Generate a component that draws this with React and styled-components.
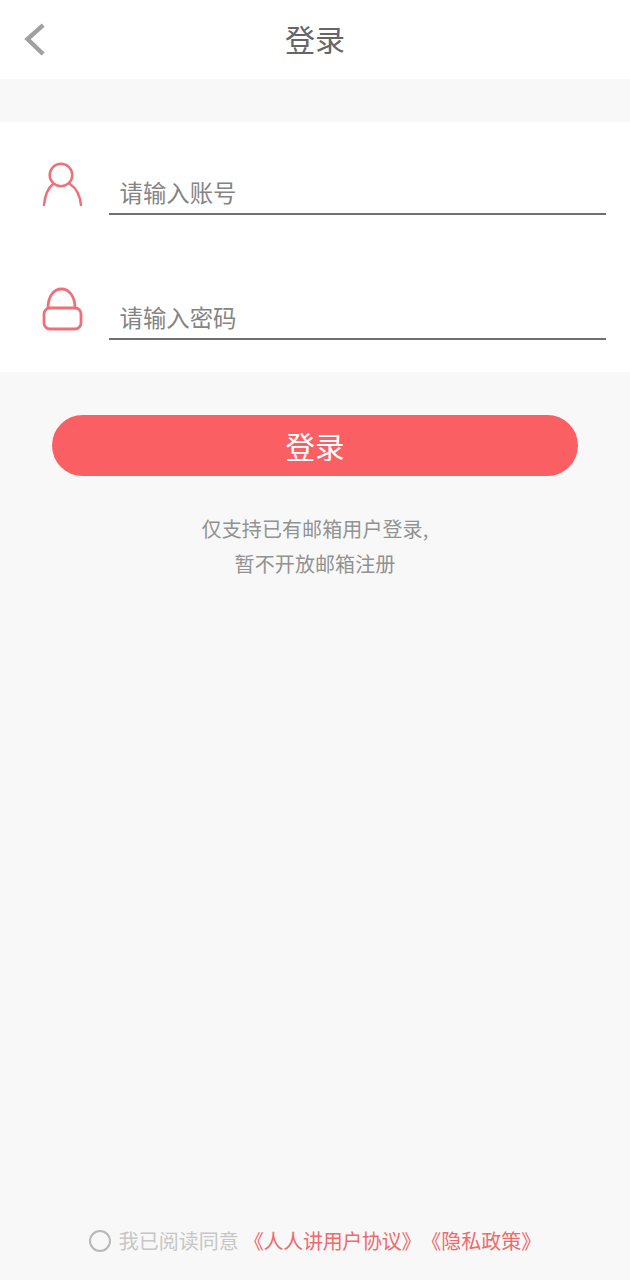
import React from "react";
import styled, { createGlobalStyle } from "styled-components";

const GlobalStyle = createGlobalStyle`
  html, body {
    margin: 0;
    padding: 0;
    background: #f8f8f8;
  }
  body {
    font-family: "Noto Sans CJK SC", "Liberation Sans", sans-serif;
  }
`;

const Page = styled.div`
  width: 630px;
  height: 1280px;
  display: flex;
  flex-direction: column;
  background: #f8f8f8;
  overflow: hidden;
`;

const Header = styled.header`
  height: 79px;
  flex: none;
  background: #fff;
  display: grid;
  grid-template-columns: 1fr auto 1fr;
  align-items: center;
`;

const BackButton = styled.div`
  padding-left: 24px;
  height: 34px;
  display: flex;
  align-items: center;
`;

const Title = styled.h1`
  margin: 0;
  padding-bottom: 4px;
  font-size: 30px;
  font-weight: 400;
  line-height: 40px;
  color: #666;
`;

const FormCard = styled.section`
  margin-top: 43px;
  height: 250px;
  flex: none;
  background: #fff;
  box-sizing: border-box;
  padding-top: 40px;
  display: flex;
  flex-direction: column;
  gap: 72px;
`;

const FieldRow = styled.div`
  display: flex;
  align-items: flex-start;
  height: 53px;
  padding: 0 24px 0 42px;
`;

const IconBox = styled.div`
  width: 67px;
  flex: none;
  line-height: 0;
`;

const FieldText = styled.div`
  flex: 1;
  height: 53px;
  box-sizing: border-box;
  border-bottom: 2px solid #707070;
  padding: 13px 0 0 10.5px;
  font-size: 23.4px;
  line-height: 34px;
  color: #848484;
`;

const SubmitButton = styled.button`
  display: block;
  margin: 43px auto 0;
  width: 526px;
  height: 61px;
  border: 0;
  border-radius: 31px;
  background: #fa5f63;
  color: #fff;
  font-family: inherit;
  font-size: 29.5px;
  line-height: 40px;
  padding: 0 0 2px;
`;

const Notice = styled.p`
  margin: 35px 0 0;
  text-align: center;
  font-size: 20px;
  line-height: 35px;
  letter-spacing: 0.1px;
  color: #929292;
`;

const Footer = styled.footer`
  margin-top: auto;
  height: 51px;
  display: flex;
  justify-content: center;
  align-items: flex-start;
  font-size: 20px;
  line-height: 24px;
`;

const Radio = styled.span`
  width: 22px;
  height: 22px;
  box-sizing: border-box;
  border: 2px solid #b8b8b8;
  border-radius: 50%;
  margin: 1px 8px 0 0;
  flex: none;
`;

const AgreeText = styled.span`
  color: #c6c6c6;
  margin-right: 5px;
`;

const PolicyLink = styled.span`
  color: #ee6a6d;
  letter-spacing: ${(props) => props.$tracking || 0}px;
`;

const UserIcon = () => (
  <svg width="42" height="48" viewBox="0 0 42 48" fill="none" stroke="#ee7078" strokeWidth="2.5" strokeLinecap="round">
    <circle cx="19" cy="13" r="11.3" />
    <path d="M2 43 C3 33 6 26 11 22" />
    <path d="M39 43 C38 33 34 26 28 22" />
  </svg>
);

const LockIcon = () => (
  <svg width="42" height="46" viewBox="0 0 42 46" fill="none" stroke="#ee7078" strokeWidth="2.8" strokeLinecap="round">
    <path d="M6 21 C6 9 12 2 19.5 2 C27 2 33 9 33 21" />
    <rect x="2" y="21" width="37" height="21" rx="6" />
  </svg>
);

const BackIcon = () => (
  <svg width="22" height="34" viewBox="0 0 22 34" fill="none" stroke="#a0a0a0" strokeWidth="4.4" strokeLinecap="square">
    <path d="M17.5 3.5 L3.5 16 L17.5 29.5" />
  </svg>
);

export default function App() {
  return (
    <Page>
      <GlobalStyle />
      <Header>
        <BackButton>
          <BackIcon />
        </BackButton>
        <Title>登录</Title>
        <span />
      </Header>
      <FormCard>
        <FieldRow>
          <IconBox>
            <UserIcon />
          </IconBox>
          <FieldText>请输入账号</FieldText>
        </FieldRow>
        <FieldRow>
          <IconBox>
            <LockIcon />
          </IconBox>
          <FieldText>请输入密码</FieldText>
        </FieldRow>
      </FormCard>
      <SubmitButton>登录</SubmitButton>
      <Notice>
        仅支持已有邮箱用户登录,
        <br />
        暂不开放邮箱注册
      </Notice>
      <Footer>
        <Radio />
        <AgreeText>我已阅读同意</AgreeText>
        <PolicyLink $tracking={-0.3}>《人人讲用户协议》</PolicyLink>
        <PolicyLink>《隐私政策》</PolicyLink>
      </Footer>
    </Page>
  );
}
